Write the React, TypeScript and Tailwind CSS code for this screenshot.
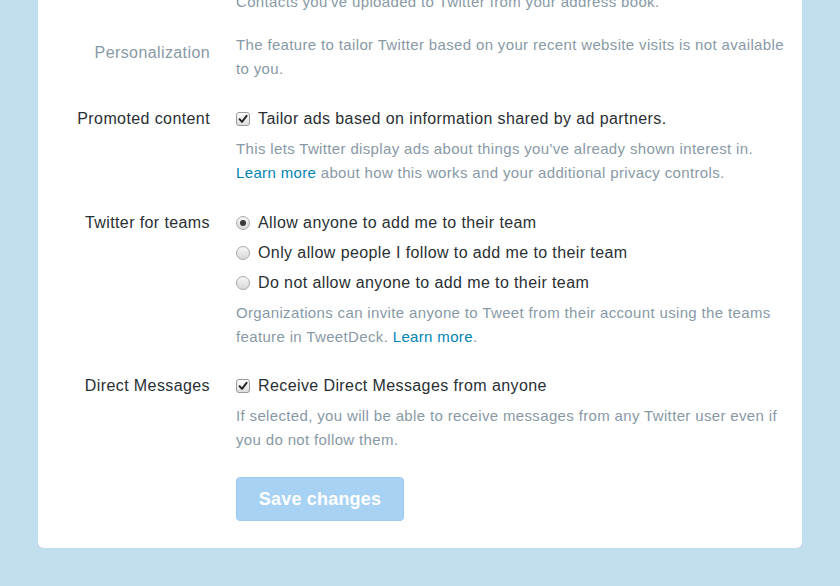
import React from 'react';

const Checkbox: React.FC = () => (
  <span className="inline-flex h-[14px] w-[14px] shrink-0 items-center justify-center rounded-[3px] border border-[#9a9a9a] bg-gradient-to-b from-[#fcfcfc] to-[#dedede]">
    <svg width="10" height="10" viewBox="0 0 10 10">
      <path d="M1.5 5.2 L4 7.8 L8.6 1.8" fill="none" stroke="#222" strokeWidth="1.9" strokeLinecap="round" strokeLinejoin="round" />
    </svg>
  </span>
);

const Radio: React.FC<{ checked?: boolean }> = ({ checked }) => (
  <span className="inline-flex h-[14px] w-[14px] shrink-0 items-center justify-center rounded-full border border-[#a8a8a8] bg-gradient-to-b from-[#f6f6f6] to-[#d8d8d8]">
    {checked && <span className="h-[6px] w-[6px] rounded-full bg-[#3a3a3a]" />}
  </span>
);

const Row: React.FC<{ label: string; muted?: boolean; className?: string; labelPad?: string; children: React.ReactNode }> = ({
  label,
  muted,
  className = '',
  labelPad = '',
  children,
}) => (
  <div className={`flex ${className}`}>
    <div
      className={`w-[172px] shrink-0 text-right text-[16px] leading-[24px] tracking-[0.4px] ${labelPad} ${
        muted ? 'text-[#8899a6]' : 'text-[#292f33]'
      }`}
    >
      {label}
    </div>
    <div className="ml-[26px] flex-1 pr-[14px]">{children}</div>
  </div>
);

const Help: React.FC<{ children: React.ReactNode }> = ({ children }) => (
  <p className="mt-[6px] text-[15px] leading-[24px] tracking-[0.35px] text-[#8899a6]">{children}</p>
);

export default function App() {
  return (
    <div className="h-[586px] w-[840px] overflow-hidden bg-[#c0deed] font-['Liberation_Sans',Arial,sans-serif]">
      <div className="mx-[38px] -mt-[10px] rounded-b-[6px] bg-white pb-[27px]">
        {/* Address book */}
        <Row label="">
          <p className="text-[15px] leading-[24px] tracking-[0.35px] text-[#8899a6]">
            Contacts you've uploaded to Twitter from your address book.
          </p>
        </Row>

        <div className="mt-[19px] flex flex-col gap-[25px]">
          {/* Personalization */}
          <Row label="Personalization" muted labelPad="pt-[8px]">
            <p className="text-[15px] leading-[24px] tracking-[0.35px] text-[#8899a6]">
              The feature to tailor Twitter based on your recent website visits is not available to you.
            </p>
          </Row>

          {/* Promoted content */}
          <Row label="Promoted content" className="mt-[1px]">
            <label className="flex items-center gap-[8px] text-[16px] leading-[24px] tracking-[0.4px] text-[#292f33]">
              <Checkbox />
              Tailor ads based on information shared by ad partners.
            </label>
            <Help>
              This lets Twitter display ads about things you've already shown interest in.{' '}
              <a className="text-[#0084b4]">Learn more</a> about how this works and your additional privacy controls.
            </Help>
          </Row>

          {/* Teams */}
          <Row label="Twitter for teams" className="mt-[1px]">
            <div className="flex flex-col gap-[6px] text-[16px] leading-[24px] tracking-[0.4px] text-[#292f33]">
              <label className="flex items-center gap-[8px]">
                <Radio checked />
                Allow anyone to add me to their team
              </label>
              <label className="flex items-center gap-[8px]">
                <Radio />
                Only allow people I follow to add me to their team
              </label>
              <label className="flex items-center gap-[8px]">
                <Radio />
                Do not allow anyone to add me to their team
              </label>
            </div>
            <Help>
              Organizations can invite anyone to Tweet from their account using the teams feature in TweetDeck.{' '}
              <a className="text-[#0084b4]">Learn more</a>.
            </Help>
          </Row>

          {/* Direct messages */}
          <Row label="Direct Messages">
            <label className="flex items-center gap-[8px] text-[16px] leading-[24px] tracking-[0.4px] text-[#292f33]">
              <Checkbox />
              Receive Direct Messages from anyone
            </label>
            <Help>
              If selected, you will be able to receive messages from any Twitter user even if you do not follow them.
            </Help>
          </Row>

          <Row label="">
            <button className="h-[44px] w-[168px] rounded-[4px] border border-[#9cc9ee] bg-[#a7d2f4] text-[18px] font-bold tracking-[0.2px] text-white">
              Save changes
            </button>
          </Row>
        </div>
      </div>
    </div>
  );
}
